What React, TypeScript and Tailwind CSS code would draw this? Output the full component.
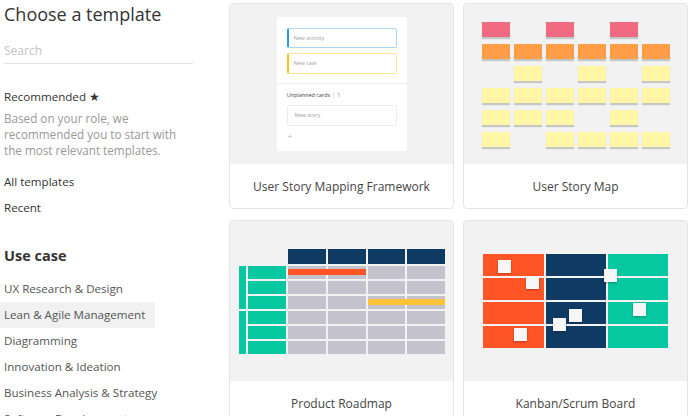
import React from "react";

const font = { fontFamily: '"Open Sans", "Liberation Sans", sans-serif' };

function Sticky({ color, show }: { color: string; show: boolean }) {
  if (!show) return <div className="h-[15px] w-[28px]" />;
  return (
    <div
      className="h-[15px] w-[28px] shadow-[0_2px_1px_rgba(0,0,0,0.18)]"
      style={{ backgroundColor: color }}
    />
  );
}

function StoryMapThumb() {
  const rows: { color: string; cols: number[] }[] = [
    { color: "#f06b82", cols: [0, 2, 4] },
    { color: "#ff9d48", cols: [0, 1, 2, 3, 4, 5] },
    { color: "#fff6a6", cols: [1, 3, 5] },
    { color: "#fff6a6", cols: [0, 1, 2, 3, 4, 5] },
    { color: "#fff6a6", cols: [0, 1, 2, 4] },
    { color: "#fff6a6", cols: [0, 2, 3, 4, 5] },
  ];
  return (
    <div className="grid grid-cols-[repeat(6,28px)] gap-x-[4px] gap-y-[7px]">
      {rows.map((r, ri) =>
        [0, 1, 2, 3, 4, 5].map((c) => (
          <Sticky key={`${ri}-${c}`} color={r.color} show={r.cols.includes(c)} />
        ))
      )}
    </div>
  );
}

function MappingThumb() {
  return (
    <div className="flex h-[134px] w-[130px] flex-col bg-white px-[10px] pt-[11px]">
      <div className="flex h-[20px] items-center rounded-[2px] border border-l-[2px] border-[#a9d5fb] border-l-[#2a98f0] pl-[5px] text-[5.5px] text-[#a0a0a0]">
        New activity
      </div>
      <div className="mt-[5px] flex h-[21px] items-center rounded-[2px] border border-l-[2px] border-[#ffe795] border-l-[#fcc21b] pl-[5px] text-[5.5px] text-[#a0a0a0]">
        New task
      </div>
      <div className="-mx-[10px] mt-[9px] h-px bg-[#efefef]" />
      <div className="mt-[7px] flex h-[8px] items-center text-[5.5px] leading-[8px] text-[#444]">
        <span>Unplanned cards</span>
        <span className="mx-[3px] h-[6px] w-px bg-[#ddd]" />
        <span className="text-[#777]">1</span>
      </div>
      <div className="mt-[6px] flex h-[21px] items-center rounded-[2px] border border-[#ececec] pl-[7px] text-[5.5px] text-[#a0a0a0]">
        New story
      </div>
      <div className="mt-[5px] pl-[1px] text-[8px] leading-[10px] text-[#bbb]">+</div>
    </div>
  );
}

function RoadmapThumb() {
  const navy = "bg-[#0e3a64]";
  const cells = [];
  for (let r = 0; r < 6; r++) {
    for (let c = 0; c < 4; c++) {
      cells.push(
        <div
          key={`g-${r}-${c}`}
          className="bg-[#c4c3cd]"
          style={{ gridRow: r + 2, gridColumn: c + 3 }}
        />
      );
    }
    cells.push(
      <div
        key={`l-${r}`}
        className="bg-[#05c8a1]"
        style={{ gridRow: r + 2, gridColumn: 2 }}
      />
    );
  }
  return (
    <div className="grid grid-cols-[7px_38px_38px_38px_37px_38px] grid-rows-[15px_repeat(6,13px)] gap-[2px]">
      {[0, 1, 2, 3].map((c) => (
        <div key={`h-${c}`} className={navy} style={{ gridRow: 1, gridColumn: c + 3 }} />
      ))}
      <div className="col-start-1 row-start-2 row-end-5 bg-[#05c8a1]" />
      <div className="col-start-1 row-start-5 row-end-8 bg-[#05c8a1]" />
      {cells}
      <div className="col-start-3 col-end-5 row-start-2 h-[6px] self-center bg-[#fd5426]" />
      <div className="col-start-5 col-end-7 row-start-4 h-[6px] self-center bg-[#fbc437]" />
    </div>
  );
}

function KanbanThumb() {
  const colors = ["bg-[#fe5426]", "bg-[#0e3a64]", "bg-[#05c8a1]"];
  const squares = [
    [15, 6],
    [43, 22],
    [121, 15],
    [150, 49],
    [86, 55],
    [70, 64],
    [31, 74],
  ];
  return (
    <div className="relative">
      <div className="grid grid-cols-[61px_60px_60px] grid-rows-[repeat(4,22px)] gap-x-[2px] gap-y-[2px]">
        {[0, 1, 2, 3].map((r) =>
          [0, 1, 2].map((c) => <div key={`${r}-${c}`} className={colors[c]} />)
        )}
      </div>
      {squares.map(([x, y], i) => (
        <div
          key={i}
          className="absolute h-[13px] w-[13px] bg-[#f6f6f6] shadow-[0_1px_2px_rgba(0,0,0,0.3)]"
          style={{ left: x, top: y }}
        />
      ))}
    </div>
  );
}

function Card({ title, children }: { title: string; children: React.ReactNode }) {
  return (
    <div className="flex h-[206px] w-[225px] flex-col overflow-hidden rounded-[4px] border border-[#e4e4e4] bg-white">
      <div className="flex h-[160px] shrink-0 items-center justify-center bg-[#f2f2f2]">
        {children}
      </div>
      <div className="flex flex-1 items-center justify-center pt-[2px] text-[12px] text-[#444]">
        {title}
      </div>
    </div>
  );
}

export default function App() {
  const navItems = [
    "UX Research & Design",
    "Lean & Agile Management",
    "Diagramming",
    "Innovation & Ideation",
    "Business Analysis & Strategy",
    "Software Development",
  ];
  return (
    <div className="flex h-[416px] w-[695px] overflow-hidden bg-white" style={font}>
      <div className="flex w-[229px] shrink-0 flex-col">
        <div className="pl-[4px] text-[18px] leading-[28px] text-[#333]">Choose a template</div>
        <div className="ml-[4px] mt-[13px] w-[189px] border-b border-[#e2e2e2] pb-[2px] text-[12px] leading-[20px] text-[#c4c4c4]">
          Search
        </div>
        <div className="mt-[23px] pl-[4px] text-[11.6px] leading-[20px] text-[#333]">Recommended ★</div>
        <div className="mt-[3px] w-[182px] pl-[4px] text-[11.7px] leading-[16px] text-[#999]">
          Based on your role, we recommended you to start with the most relevant templates.
        </div>
        <div className="mt-[14px] pl-[4px] text-[11.6px] leading-[20px] text-[#333]">All templates</div>
        <div className="mt-[6px] pl-[4px] text-[11.6px] leading-[20px] text-[#333]">Recent</div>
        <div className="mt-[28px] pl-[4px] text-[14.5px] font-bold leading-[20px] text-[#333]">Use case</div>
        <div className="mt-[10px] flex flex-col">
          {navItems.map((item) => (
            <div
              key={item}
              className={`h-[26px] w-[155px] whitespace-nowrap pl-[4px] text-[11.6px] leading-[26px] text-[#555] ${
                item === "Lean & Agile Management" ? "bg-[#f1f1f1]" : ""
              }`}
            >
              {item}
            </div>
          ))}
        </div>
      </div>
      <div className="grid grid-cols-[225px_225px] content-start gap-x-[9px] gap-y-[11px] pt-[3px]">
        <Card title="User Story Mapping Framework">
          <MappingThumb />
        </Card>
        <Card title="User Story Map">
          <StoryMapThumb />
        </Card>
        <Card title="Product Roadmap">
          <RoadmapThumb />
        </Card>
        <Card title="Kanban/Scrum Board">
          <KanbanThumb />
        </Card>
      </div>
    </div>
  );
}
